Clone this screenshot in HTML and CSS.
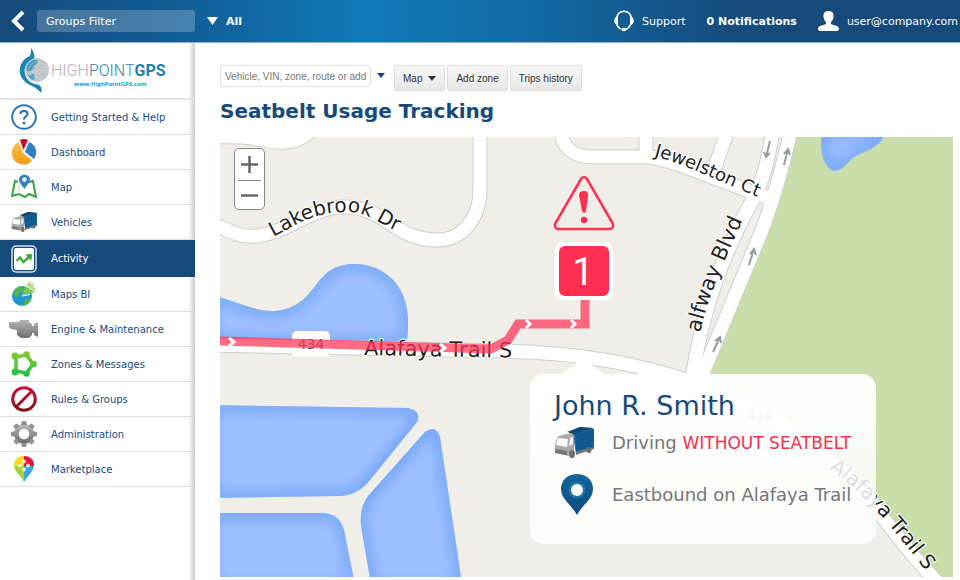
FILE: index.html
```
<!DOCTYPE html>
<html lang="en">
<head>
    <meta charset="utf-8">
    <title>Seatbelt Usage Tracking</title>
    <link rel="stylesheet" href="styles.css">
</head>

<body>

    <header class="TopBar">
        <button class="Back" aria-label="Back">
            <svg width="14" height="22" viewBox="0 0 14 22"><path d="M12 2 L3 11 L12 20" fill="none" stroke="#fff" stroke-width="4"/></svg>
        </button>
        <input type="text" class="GroupsFilter" placeholder="Groups Filter" aria-label="Groups Filter">
        <button class="GroupPicker">
            <svg width="12" height="8" viewBox="0 0 12 8"><path d="M0 0 H11 L5.5 8Z" fill="#fff"/></svg>
            All
        </button>
        <nav class="TopLinks">
            <a href="#" class="Support">
                <svg width="20" height="22" viewBox="0 0 20 22">
                    <path d="M3 8 C3 -1 17 -1 17 8 V13 C16 17 14 19 11 19.5" fill="none" stroke="#fff" stroke-width="1.5"/>
                    <path d="M3 7 V14 C3 17 5 18 7 19" fill="none" stroke="#fff" stroke-width="1.5"/>
                    <path d="M4 6 C-1 7 -1 15 4 15Z M16 6 C21 7 21 15 16 15Z" fill="#fff"/>
                    <ellipse cx="10" cy="19.5" rx="2.5" ry="1.7" fill="#fff"/>
                </svg>
                Support
            </a>
            <a href="#" class="Notifications">0 Notifications</a>
            <a href="#" class="User">
                <svg width="21" height="20" viewBox="0 0 21 20"><path d="M10.5 0 C14 0 16 2 15.5 6 C15 9 14 10 13 11 V13 C15 14.5 21 14 21 18 Q21 20 19 20 H2 Q0 20 0 18 C0 14 6 14.5 8 13 V11 C7 10 6 9 5.5 6 C5 2 7 0 10.5 0Z" fill="#fff"/></svg>
                user@company.com
            </a>
        </nav>
    </header>

    <div class="Content">
        <aside class="Sidebar">
            <a href="#" class="Logo" aria-label="High Point GPS">
                <svg width="160" height="50" viewBox="15 45 160 50">
                    <path d="M31 48 C34 52 35 55 34 60 C23 61 21 77 32 83 L39 85 C42 87 42 90 41 93 C39 90 36 88 32 86 C15 79 17 61 30 56 C31 54 31 51 31 48Z" fill="#1c86b0"/>
                    <circle cx="37" cy="70" r="12" fill="#c0c4c7"/>
                    <path d="M26 66 C30 60 34 59 37 60 C39 63 36 64 34 67 C33 71 30 72 27 71Z M28 75 L34 74 L35 79 L32 80Z" fill="#4a9fc0"/>
                    <g fill="none" stroke="#fff" stroke-width=".7" stroke-dasharray="1 1.5" opacity=".7">
                        <circle cx="37" cy="70" r="2"/>
                        <circle cx="37" cy="70" r="5"/>
                        <circle cx="37" cy="70" r="8"/>
                        <circle cx="37" cy="70" r="11"/>
                    </g>
                    <text x="51" y="76" class="LogoText"><tspan fill="#b5afb2">HIGH</tspan><tspan fill="#2c86ad">POINT</tspan><tspan class="LogoBold">GPS</tspan></text>
                    <text x="74" y="86" class="LogoUrl">www.HighPointGPS.com</text>
                </svg>
            </a>
            <nav class="Menu">
                <a href="#">
                    <svg width="26" height="26" viewBox="0 0 26 26"><circle cx="13" cy="13" r="11.8" fill="none" stroke="#2778ba" stroke-width="2"/><path d="M9.5 10 C9.5 5.5 16.5 6 16.5 10 C16.5 12.5 13 12.5 13 15.5" fill="none" stroke="#2778ba" stroke-width="2.2"/><circle cx="13" cy="19" r="1.5" fill="#2778ba"/></svg>
                    Getting Started &amp; Help
                </a>
                <a href="#">
                    <svg width="26" height="26" viewBox="0 0 26 26"><defs><linearGradient id="Orange" x2="0" y2="1"><stop offset="0" stop-color="#ffc34a"/><stop offset="1" stop-color="#f39a18"/></linearGradient></defs><path d="M12 14 L8 3 C-3 8 -1 25 12 25.5 C17 25.5 19 24 21 21Z" fill="url(#Orange)"/><path d="M14 13 L18 3 C26 7 27 14 23 20Z" fill="#2f7fc4"/><path d="M12.5 11 L9 1 Q13 -1 17 1Z" fill="#c20f36"/></svg>
                    Dashboard
                </a>
                <a href="#">
                    <svg width="26" height="26" viewBox="0 0 26 26"><path d="M7 8 L4 7 L1 22 L8 20 L14 23 L18 20 L25 23 L22 7 L18 8" fill="none" stroke="#36a345" stroke-width="2"/><path d="M8 20 L8 11" stroke="#b9dfae" stroke-width="1"/><path d="M13.5 15 C10 10 8 8 8 5.5 C8 -1 19 -1 19 5.5 C19 8 17 10 13.5 15Z" fill="#2f7fc4"/><circle cx="13.5" cy="5.5" r="2.3" fill="#fff"/></svg>
                    Map
                </a>
                <a href="#">
                    <svg width="26" height="20" viewBox="0 0 40 31"><use href="#Truck"/></svg>
                    Vehicles
                </a>
                <a href="#" class="Active">
                    <svg width="26" height="28" viewBox="0 0 26 28"><rect x="1" y="1" width="24" height="26" rx="4" fill="#164a7a" stroke="#cfe6f2" stroke-width="1.5"/><rect x="3" y="3" width="20" height="22" rx="2" fill="#fff"/><path d="M5.5 16 L9 12.5 L12.5 17 L18 12" fill="none" stroke="#3fa535" stroke-width="2.4"/><path d="M14.5 9.5 L21.5 9 L20 16Z" fill="#3fa535"/></svg>
                    Activity
                </a>
                <a href="#">
                    <svg width="26" height="26" viewBox="0 0 26 26"><circle cx="11" cy="15" r="10" fill="#1f9ad0"/><path d="M2 12 C4 7 8 5 11 5 L12 9 L8 13 L6 17Z M12 20 L20 17 C19 22 16 24 13 25Z" fill="#4fb648"/><path d="M11 15 L14 5 L24 11Z" fill="#7cc653"/><path d="M11 15 L19 13.5" stroke="#fff" stroke-width="1.2"/><path d="M15 4 L19 0 L20 3 L23 2 L22 6 L25 7 L23 10Z" fill="#b5dc8a"/></svg>
                    Maps BI
                </a>
                <a href="#">
                    <svg width="30" height="18" viewBox="0 0 30 18"><defs><linearGradient id="Grey" x2="0" y2="1"><stop offset="0" stop-color="#b5b5b5"/><stop offset="1" stop-color="#707070"/></linearGradient></defs><path d="M0 2 H8 L11 1 V0 H20 V2 L23 4 V6 H25 V4 L29 2 V17 L25 15 V13 H23 V15 L20 18 H12 L8 15 V10 L2 9 Q0 8 0 6Z" fill="url(#Grey)"/></svg>
                    Engine &amp; Maintenance
                </a>
                <a href="#">
                    <svg width="26" height="26" viewBox="0 0 26 26">
                        <defs><linearGradient id="Green" gradientUnits="userSpaceOnUse" x1="0" y1="0" x2="0" y2="26"><stop offset="0" stop-color="#8acb2c"/><stop offset="1" stop-color="#16c246"/></linearGradient></defs>
                        <path d="M5 6 L15.5 4 L22 13 L15.5 22 L5 20Z" fill="none" stroke="url(#Green)" stroke-width="3.5"/>
                        <g fill="url(#Green)"><circle cx="4" cy="5" r="3.4"/><circle cx="15.500" cy="3.4" r="3.2"/><circle cx="22.600" cy="13" r="3.2"/><circle cx="15.500" cy="22.600" r="3.2"/><circle cx="4" cy="21" r="3.4"/></g>
                    </svg>
                    Zones &amp; Messages
                </a>
                <a href="#">
                    <svg width="26" height="26" viewBox="0 0 26 26"><defs><linearGradient id="Red" gradientUnits="userSpaceOnUse" x1="0" y1="0" x2="0" y2="26"><stop offset="0" stop-color="#cf1040"/><stop offset="1" stop-color="#7d1616"/></linearGradient></defs><g fill="none" stroke="url(#Red)" stroke-width="3"><circle cx="13" cy="13" r="11.3"/><path d="M21 5 L5 21"/></g></svg>
                    Rules &amp; Groups
                </a>
                <a href="#">
                    <svg width="26" height="26" viewBox="0 0 26 26"><circle cx="13" cy="13" r="7.5" fill="none" stroke="url(#Grey)" stroke-width="4.500"/><g fill="#919191"><path id="Teeth" d="M10 4 L11 0 H15 L16 4Z M10 22 L11 26 H15 L16 22Z M4 10 L0 11 V15 L4 16Z M22 10 L26 11 V15 L22 16Z"/><use href="#Teeth" transform="rotate(45 13 13)"/></g></svg>
                    Administration
                </a>
                <a href="#">
                    <svg width="20" height="26" viewBox="0 0 20 26"><defs><clipPath id="PinShape"><path d="M10 26 C6 19 0 15 0 9 C0 -3 20 -3 20 9 C20 15 14 19 10 26Z"/></clipPath></defs><g clip-path="url(#PinShape)"><path d="M0 0 H10 V10 H0Z" fill="#f9dc1e"/><path d="M10 0 H20 V10 H10Z" fill="#e3173e"/><path d="M0 10 H10 V26 H0Z" fill="#a4d233"/><path d="M10 10 H20 V26 H10Z" fill="#35a8e0"/><g fill="#fff" opacity=".8"><circle cx="10" cy="5.500" r="2"/><circle cx="10" cy="13.500" r="2"/><circle cx="6" cy="9.500" r="2"/><circle cx="14" cy="9.500" r="2"/></g></g></svg>
                    Marketplace
                </a>
            </nav>
        </aside>

        <main>
            <div class="Toolbar">
                <input type="text" class="Search" placeholder="Vehicle, VIN, zone, route or add" aria-label="Search">
                <button class="SearchMore" aria-label="More">
                    <svg width="8" height="5" viewBox="0 0 8 5"><path d="M0 0 H8 L4 5Z" fill="#1d3f7c"/></svg>
                </button>
                <div class="Buttons">
                    <button>Map <svg width="8" height="5" viewBox="0 0 8 5"><path d="M0 0 H8 L4 5Z" fill="#333"/></svg></button>
                    <button>Add zone</button>
                    <button>Trips history</button>
                </div>
            </div>

            <h1>Seatbelt Usage Tracking</h1>

            <div class="MapBox">
                <svg class="Map" viewBox="220 137 733 440" preserveAspectRatio="xMinYMin slice">
                    <defs>
                        <g id="Lakes">
                            <path d="M210 295 C240 302 255 312 275 311 C320 306 310 268 350 264 C385 262 408 287 408 320 C408 330 408 338 406 345 L210 341Z"/>
                            <path d="M210 405 L408 408 Q422 411 417 422 L370 480 Q358 495 340 496 L210 498Z"/>
                            <path d="M210 513 H323 Q340 514 344 530 L356 590 H210Z"/>
                            <path d="M425 432 L369 495 Q359 507 361 526 L372 590 H463 L440 437 Q436 424 425 432Z"/>
                            <path d="M822 130 C818 155 826 170 835 171 C845 170 848 158 862 153 C875 148 884 142 885 130Z"/>
                        </g>
                        <clipPath id="LakeShape">
                            <path d="M210 295 C240 302 255 312 275 311 C320 306 310 268 350 264 C385 262 408 287 408 320 C408 330 408 338 406 345 L210 341Z"/>
                            <path d="M210 405 L408 408 Q422 411 417 422 L370 480 Q358 495 340 496 L210 498Z"/>
                            <path d="M210 513 H323 Q340 514 344 530 L356 590 H210Z"/>
                            <path d="M425 432 L369 495 Q359 507 361 526 L372 590 H463 L440 437 Q436 424 425 432Z"/>
                            <path d="M822 130 C818 155 826 170 835 171 C845 170 848 158 862 153 C875 148 884 142 885 130Z"/>
                        </clipPath>
                        <filter id="Shore"><feGaussianBlur stdDeviation="7"/></filter>
                        <g id="Roads">
                            <path d="M210 137 C240 136 250 137 268 141 C295 146 305 136 320 125"/>
                            <path d="M210 223 C230 230 238 238 257 236 C290 232 310 207 345 207 C385 207 395 240 437 240 C465 240 480 215 480 190 V130"/>
                            <path d="M561 130 C561 148 575 157 592 157 H650 C680 162 720 182 775 200 M646 130 V157 M728 130 L713 172"/>
                            <path d="M210 345 L500 351 C580 352 640 364 692 382 C760 405 830 450 877 510 C900 539 915 560 945 590"/>
                            <path d="M773 130 C768 160 764 180 751 203 C725 250 702 310 692 380"/>
                            <path d="M791 130 C782 170 770 210 760 235 L700 380"/>
                        </g>
                        <path id="LakebrookLine" d="M273 237 C300 223 312 213 345 212 C370 211 380 227 410 236"/>
                        <path id="JewelstonLine" d="M654 156 C685 164 720 182 770 202"/>
                        <path id="BlvdLine" d="M700 333 C708 296 725 260 748 208"/>
                        <path id="TrailLine" d="M829 469 C865 493 895 530 938 587"/>
                        <g id="Truck">
                            <path d="M15 6 L26 0 L40 2 V21 L22 27 L19 9Z" fill="#3a6f92"/>
                            <path d="M21 7 L40 2 V20 L22 24Z" fill="#115b91"/>
                            <path d="M13 5 L26 0 L40 1 L21 7Z" fill="#0e4977"/>
                            <path d="M3 11 L5 9 L17 6 L20 9 V25 L15 29 L1 26 V18Z" fill="#a9a9a9"/>
                            <path d="M4 11 L14 12 L13 20 L2 18Z" fill="#fff"/>
                            <path d="M16 11 L19 10 V17 L15 19Z" fill="#eee"/>
                            <path d="M1 22 L13 24 V28 L1 26Z" fill="#777"/>
                            <path d="M22 25 L40 20 V22 L22 28Z" fill="#777"/>
                            <ellipse cx="18" cy="27" rx="3" ry="4" fill="#6e6e6e"/>
                            <ellipse cx="35" cy="23" rx="2.5" ry="3" fill="#6e6e6e"/>
                        </g>
                    </defs>

                    <rect x="220" y="137" width="733" height="440" fill="#f0eee8"/>
                    <path d="M797 130 C785 180 770 220 755 262 L698 384 C760 405 830 450 877 510 C900 539 915 560 945 590 H960 V130Z" fill="#c9deaa"/>

                    <use href="#Lakes" fill="#9ebfff"/>
                    <g clip-path="url(#LakeShape)">
                        <use href="#Lakes" fill="none" stroke="#72a4f5" stroke-width="11" filter="url(#Shore)"/>
                    </g>

                    <use href="#Roads" class="RoadEdge"/>
                    <use href="#Roads" class="Road"/>

                    <!-- one-way arrows -->
                    <g fill="none" stroke="#9a9aa4" stroke-width="2">
                        <path d="M784 165 L788 149 M784 154 L788 149 L790 155"/>
                        <path d="M770 141 L766 157 M764 152 L766 157 L770 153"/>
                        <path d="M749 265 L754 249 M750 254 L754 249 L756 255"/>
                        <path d="M713 352 L720 337 M715 341 L720 337 L721 343"/>
                    </g>

                    <rect x="292" y="331" width="38" height="26" rx="5" fill="#fff"/>
                    <text x="311" y="349" class="Shield">434</text>
                    <rect x="741" y="403" width="39" height="26" rx="5" fill="#fff"/>
                    <text x="760" y="421" class="Shield">434</text>

                    <g class="Street">
                        <text><textPath href="#LakebrookLine">Lakebrook Dr</textPath></text>
                        <text class="SmallStreet"><textPath href="#JewelstonLine">Jewelston Ct</textPath></text>
                        <text class="BigStreet"><textPath href="#BlvdLine">alfway Blvd</textPath></text>
                        <text><textPath href="#TrailLine">Alafaya Trail S</textPath></text>
                        <text x="364" y="355" transform="rotate(1 364 355)" class="BigStreet">Alafaya Trail S</text>
                    </g>

                    <!-- driven route -->
                    <path d="M220 341 L491 349 L508 340 L518 324 H585 V296" fill="none" stroke="#ff3355" stroke-opacity=".72" stroke-width="9"/>
                    <path d="M229 338 L234 342 L229 346 M440 344 L445 348 L440 352 M526 320 L530 324 L526 328 M571 320 L575 324 L571 328" fill="none" stroke="#fff" stroke-width="3"/>

                    <rect x="555" y="242" width="58" height="58" rx="8" fill="#fff"/>
                    <rect x="559" y="246" width="50" height="50" rx="6" fill="#ff2f52"/>
                    <text x="583" y="285" class="MarkerNumber">1</text>

                    <path d="M581 179 Q584 175 587 179 L613 224 Q614 229 609 229 H559 Q554 229 555 224Z" fill="none" stroke="#ff2f52" stroke-width="2.5"/>
                    <path d="M579 195 Q579 191 584 191 Q589 191 588 196 L586 211 Q584 215 582 211Z" fill="#ff2f52"/>
                    <circle cx="584" cy="220" r="3.2" fill="#ff2f52"/>
                </svg>

                <div class="Zoom">
                    <button aria-label="Zoom in"><svg width="17" height="17" viewBox="0 0 17 17"><path d="M0 8.500 H17 M8.500 0 V17" stroke="#666" stroke-width="2.5"/></svg></button>
                    <button aria-label="Zoom out"><svg width="17" height="17" viewBox="0 0 17 17"><path d="M0 8.500 H17" stroke="#666" stroke-width="2.5"/></svg></button>
                </div>

                <div class="Popup">
                    <h2>John R. Smith</h2>
                    <p>
                        <svg width="40" height="31" viewBox="0 0 40 31"><use href="#Truck"/></svg>
                        <span>Driving <span class="Warning">WITHOUT SEATBELT</span></span>
                    </p>
                    <p>
                        <svg width="46" height="41" viewBox="0 0 46 41"><defs><linearGradient id="PinBlue" x2="0" y2="1"><stop offset="0" stop-color="#14659c"/><stop offset="1" stop-color="#0d4a7c"/></linearGradient></defs><path d="M23 41 C17 30 7 25 7 15 C7 -5 39 -5 39 15 C39 25 29 30 23 41Z" fill="url(#PinBlue)"/><circle cx="23" cy="16" r="7" fill="none" stroke="#1f74ab" stroke-width="3"/><circle cx="23" cy="16" r="6" fill="#fff"/></svg>
                        <span>Eastbound on Alafaya Trail</span>
                    </p>
                </div>
            </div>
        </main>
    </div>

</body>
</html>
```
FILE: styles.css
```
* {
    box-sizing: border-box;
}

body {
    margin: 0;
    min-height: 100vh;
    display: flex;
    flex-direction: column;
    background: #fff;
    font-family: Verdana, "DejaVu Sans", sans-serif;
    font-size: 11px;
    color: #164a7a;
}

a {
    color: inherit;
    text-decoration: none;
}

button {
    font: inherit;
    color: inherit;
    background: none;
    border: none;
    padding: 0;
    cursor: pointer;
}

svg {
    display: block;
    flex: none;
}

h1,
h2,
p {
    margin: 0;
}

/* top bar */

.TopBar {
    display: flex;
    align-items: center;
    height: 43px;
    padding: 0 2px 0 11px;
    color: #fff;
    background: linear-gradient(to right, #164a7a, #125c96 18%, #107ab8 38%, #126ba6 55%, #164a7a 77%);
    border-bottom: 1px solid #8fb0d4;
}

.GroupsFilter {
    width: 158px;
    height: 22px;
    margin: 0 12px;
    padding: 0 9px;
    font: inherit;
    color: #fff;
    background: rgba(255, 255, 255, 0.22);
    border: none;
    border-radius: 3px;
}

.GroupsFilter::placeholder {
    color: #fff;
    opacity: 1;
}

.GroupPicker {
    display: flex;
    align-items: center;
    gap: 7px;
    font-weight: bold;
}

.TopLinks {
    display: flex;
    align-items: center;
    gap: 21px;
    margin-left: auto;
}

.TopLinks a {
    display: flex;
    align-items: center;
    gap: 8px;
}

.Notifications {
    font-weight: bold;
}

/* sidebar */

.Content {
    flex: 1;
    display: flex;
}

.Sidebar {
    flex: none;
    width: 195px;
    background: linear-gradient(to left, #ccc, #fff 7px);
}

.Logo {
    display: block;
    height: 57px;
    padding: 2px 0 0 15px;
    border-bottom: 2px solid #e4e4e4;
}

.LogoText {
    font-family: Roboto, sans-serif;
    font-size: 16px;
    font-weight: 300;
}

.LogoBold {
    font-weight: 700;
    fill: #1c7fae;
}

.LogoUrl {
    font-family: "Open Sans", sans-serif;
    font-size: 6px;
    font-weight: 700;
    fill: #1c9ad0;
}

.Menu a {
    display: grid;
    grid-template-columns: 48px auto;
    align-items: center;
    justify-content: start;
    gap: 3px;
    height: 35px;
    font-size: 10px;
    border-bottom: 1px solid #ddd;
}

.Menu svg {
    justify-self: center;
}

.Menu .Active {
    height: 37px;
    color: #fff;
    background: #164a7a;
    border-bottom: none;
}

/* page */

main {
    flex: 1;
    min-width: 0;
    display: flex;
    flex-direction: column;
    padding: 22px 7px 3px 25px;
}

.Toolbar {
    display: flex;
    align-items: flex-start;
    font-family: "Liberation Sans", Arial, sans-serif;
    font-size: 10px;
    color: #333;
}

.Search {
    width: 151px;
    height: 22px;
    padding: 0 4px;
    font: inherit;
    border: 1px solid #ddd;
    border-radius: 4px;
}

.Search::placeholder {
    color: #777;
    opacity: 1;
}

.SearchMore {
    padding: 8px 9px 8px 6px;
}

.Buttons {
    display: flex;
    gap: 2px;
}

.Buttons button {
    display: flex;
    align-items: center;
    gap: 6px;
    height: 26px;
    padding: 0 8px;
    background: linear-gradient(#f8f8f8, #e6e6e6);
    border: 1px solid #ddd;
    border-radius: 2px;
}

h1 {
    height: 46px;
    line-height: 40px;
    font-size: 20px;
}

.MapBox {
    position: relative;
    flex: 1;
    min-height: 440px;
}

.Map {
    width: 100%;
    height: 100%;
}

.Road {
    fill: none;
    stroke: #fff;
    stroke-width: 13px;
}

.RoadEdge {
    fill: none;
    stroke: #cfcfcf;
    stroke-width: 15px;
}

.Street {
    font-size: 20px;
    fill: #222;
    stroke: #fff;
    stroke-width: 2px;
    paint-order: stroke;
}

.SmallStreet {
    font-size: 18px;
}

.BigStreet {
    font-size: 21px;
}

.Shield {
    font-size: 14px;
    fill: #555;
    text-anchor: middle;
}

.MarkerNumber {
    font-family: Roboto, sans-serif;
    font-size: 38px;
    fill: #fff;
    text-anchor: middle;
}

.Zoom {
    position: absolute;
    left: 14px;
    top: 11px;
    width: 31px;
    padding: 0 3px;
    background: #fff;
    border: 1px solid #888;
    border-radius: 5px;
}

.Zoom button {
    display: flex;
    align-items: center;
    justify-content: center;
    width: 100%;
    height: 31px;
}

.Zoom button + button {
    height: 29px;
    border-top: 1px solid #888;
}

.Popup {
    position: absolute;
    left: 310px;
    top: 237px;
    width: 346px;
    height: 170px;
    padding: 16px 20px 0 24px;
    background: linear-gradient(rgba(255, 255, 255, 0.98), rgba(255, 255, 255, 0.84) 60%);
    border-radius: 14px;
}

/* pointer towards the marker */
.Popup::before {
    content: "";
    position: absolute;
    left: 32px;
    bottom: 100%;
    border: 21px solid transparent;
    border-top: none;
    border-bottom: 16px solid #fff;
}

.Popup h2 {
    font-size: 27px;
    font-weight: normal;
    line-height: 32px;
}

.Popup p {
    display: grid;
    grid-template-columns: 46px auto;
    align-items: center;
    justify-content: start;
    gap: 12px;
    height: 41px;
    margin-bottom: 11px;
    font-size: 18px;
    white-space: nowrap;
    color: #777;
}

.Warning {
    font-size: 17px;
    color: #f2304f;
}
```
